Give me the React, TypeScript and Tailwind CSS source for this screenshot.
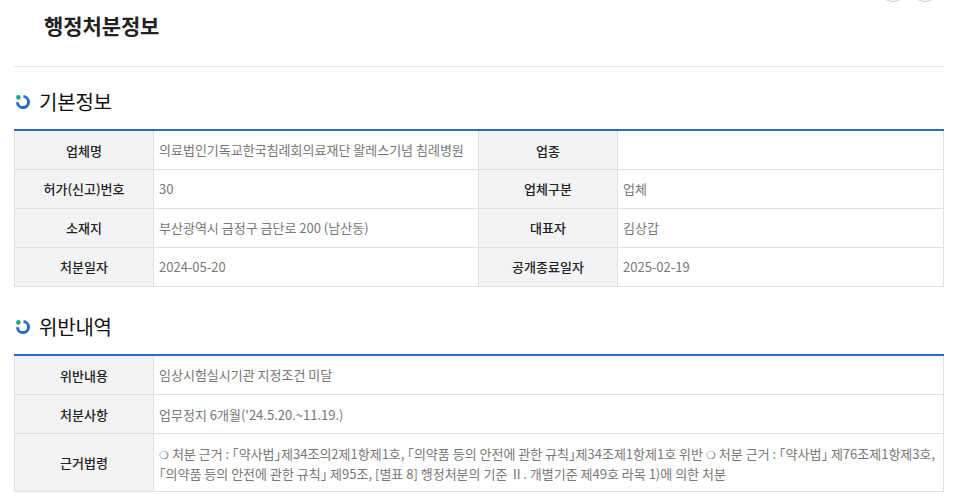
const font = { fontFamily: '"Noto Sans CJK KR", "Noto Sans", sans-serif' };

function SectionTitle({ children }: { children: string }) {
  return (
    <div className="flex items-center h-[30px] gap-[9px] pl-[2px]">
      <svg width="14" height="14" viewBox="0 0 14 14" className="shrink-0">
        <path d="M7.5 1.6 A5.5 5.5 0 1 1 1.5 7.2" fill="none" stroke="#2b6cc9" strokeWidth="3" />
        <circle cx="2.4" cy="2.4" r="2.3" fill="#17a98f" />
      </svg>
      <h2 className="text-[20px] leading-[30px] font-normal text-[#111] tracking-[-0.2px]">{children}</h2>
    </div>
  );
}

function Br({ children }: { children: string }) {
  return <span className="[font-feature-settings:'halt']">{children}</span>;
}

function Ring() {
  return <span className="text-[11px]">❍</span>;
}

const th = "bg-[#f2f3f5] border border-[#e0e0e0] text-[13px] font-medium text-[#222] text-center align-middle p-0 pt-[1px]";
const td = "border border-[#e0e0e0] text-[13px] font-normal text-[#777] text-left align-middle px-[5px] pt-[1px] pb-0";

const basicInfo = [
  ["업체명", "의료법인기독교한국침례회의료재단 왈레스기념 침례병원", "업종", ""],
  ["허가(신고)번호", "30", "업체구분", "업체"],
  ["소재지", "부산광역시 금정구 금단로 200 (남산동)", "대표자", "김상갑"],
  ["처분일자", "2024-05-20", "공개종료일자", "2025-02-19"],
];

export default function App() {
  return (
    <div className="w-[957px] h-[503px] overflow-hidden bg-white relative" style={font}>
      {/* cut off buttons at the top */}
      <div className="absolute -top-[28px] left-[878px] flex gap-[2px]">
        <span className="w-[30px] h-[30px] rounded-full border border-[#ccc]" />
        <span className="w-[30px] h-[30px] rounded-full border border-[#ccc]" />
      </div>

      <div className="ml-[14px] w-[930px]">
        <div className="h-[67px] border-b border-[#e5e5e5] pl-[30px] pt-[9px]">
          <h1 className="text-[21px] leading-[32px] font-bold text-[#222] tracking-[-0.1px]">행정처분정보</h1>
        </div>

        <div className="mt-[20px] mb-[12px]">
          <SectionTitle>기본정보</SectionTitle>
        </div>
        <table className="w-[929px] table-fixed border-collapse border-t-2 border-t-[#2b6cc9] [&_tr:first-child>*]:border-t-0">
          <colgroup>
            <col className="w-[139px]" />
            <col className="w-[325px]" />
            <col className="w-[139px]" />
            <col className="w-[326px]" />
          </colgroup>
          <tbody>
            {basicInfo.map((row) => (
              <tr key={row[0]} className="h-[39px]">
                <th className={th}>{row[0]}</th>
                <td className={`${td} leading-[20px]`}>{row[1]}</td>
                <th className={th}>{row[2]}</th>
                <td className={`${td} leading-[20px]`}>{row[3]}</td>
              </tr>
            ))}
          </tbody>
        </table>

        <div className="mt-[25px] mb-[12px]">
          <SectionTitle>위반내역</SectionTitle>
        </div>
        <table className="w-[929px] table-fixed border-collapse border-t-2 border-t-[#2b6cc9] [&_tr:first-child>*]:border-t-0">
          <colgroup>
            <col className="w-[139px]" />
            <col className="w-[790px]" />
          </colgroup>
          <tbody>
            <tr className="h-[40px]">
              <th className={th}>위반내용</th>
              <td className={`${td} leading-[20px]`}>임상시험실시기관 지정조건 미달</td>
            </tr>
            <tr className="h-[39px]">
              <th className={th}>처분사항</th>
              <td className={`${td} leading-[20px]`}>업무정지 6개월('24.5.20.~11.19.)</td>
            </tr>
            <tr className="h-[58px]">
              <th className={th}>근거법령</th>
              <td className={`${td} leading-[19px]`}>
                <Ring /> 처분 근거 : <Br>「</Br>약사법<Br>」</Br>제34조의2제1항제1호, <Br>「</Br>의약품 등의 안전에 관한 규칙<Br>」</Br>제34조제1항제1호 위반 <Ring /> 처분 근거 : <Br>「</Br>약사법<Br>」</Br> 제76조제1항제3호, <Br>「</Br>의약품 등의 안전에 관한 규칙<Br>」</Br> 제95조, [별표 8] 행정처분의 기준 Ⅱ. 개별기준 제49호 라목 1)에 의한 처분
              </td>
            </tr>
          </tbody>
        </table>
      </div>
    </div>
  );
}
